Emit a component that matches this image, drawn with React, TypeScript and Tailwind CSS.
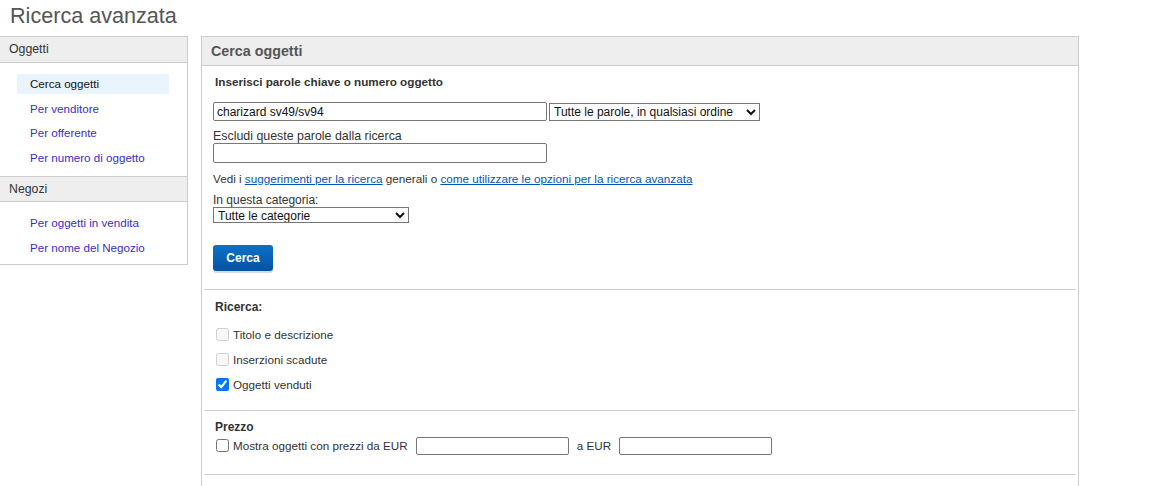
import React from "react";

const sideLink = "flex items-center h-[20px] ml-[17px] w-[152px] pl-[13px] text-[11.6px] text-[#3c2ccc]";

function SideSection({ title, items, active }: { title: string; items: string[]; active?: string }) {
  return (
    <div>
      <div className="h-[26px] flex items-center px-[9px] bg-[#eeeeee] border-b border-[#cccccc] text-[12.3px] text-[#333]">
        {title}
      </div>
      <ul className="flex flex-col gap-[4.6px] pt-[11px] pb-[8px]">
        {items.map((it) =>
          it === active ? (
            <li key={it} className={`${sideLink} bg-[#e9f4fd] !text-[#111]`}>
              {it}
            </li>
          ) : (
            <li key={it} className={sideLink}>
              <a href="#">{it}</a>
            </li>
          )
        )}
      </ul>
    </div>
  );
}

function Divider() {
  return <div className="mx-[2px] h-px bg-[#d0d0d0]" />;
}

function CheckRow({ label, checked, disabled }: { label: string; checked?: boolean; disabled?: boolean }) {
  return (
    <label className="flex items-center h-[18px] gap-[4px]">
      <input type="checkbox" defaultChecked={checked} disabled={disabled} className="ml-[3px] w-[13px] h-[13px]" />
      <span>{label}</span>
    </label>
  );
}

export default function App() {
  return (
    <div className="min-h-screen bg-white text-[11.7px] text-[#333]" style={{ fontFamily: '"Liberation Sans", Arial, sans-serif' }}>
      <h1 className="pl-[10px] pt-[3px] h-[36px] text-[21.6px] leading-[26px] text-[#555]">Ricerca avanzata</h1>

      <div className="flex items-start gap-[13px]">
        {/* Sidebar */}
        <aside className="w-[188px] border-t border-r border-b border-[#cccccc]">
          <SideSection
            title="Oggetti"
            active="Cerca oggetti"
            items={["Cerca oggetti", "Per venditore", "Per offerente", "Per numero di oggetto"]}
          />
          <div className="border-t border-[#cccccc]">
            <div className="h-[25px] flex items-center px-[9px] bg-[#eeeeee] border-b border-[#cccccc] text-[12.3px] text-[#333]">
              Negozi
            </div>
            <ul className="flex flex-col gap-[5px] pt-[11px] pb-[6px]">
              <li className={sideLink}><a href="#">Per oggetti in vendita</a></li>
              <li className={sideLink}><a href="#">Per nome del Negozio</a></li>
            </ul>
          </div>
        </aside>

        {/* Main panel */}
        <main className="w-[878px] border border-[#cccccc]">
          <div className="h-[29px] flex items-center pl-[9px] pt-px bg-[#eeeeee] border-b border-[#cccccc] text-[14.3px] font-bold text-[#555]">
            Cerca oggetti
          </div>

          <section className="px-[11px] pt-[8px] pb-[18px]">
            <p className="pl-[2px] font-bold leading-[16px]">Inserisci parole chiave o numero oggetto</p>
            <div className="mt-[12px] flex items-center gap-[2px]">
              <input
                type="text"
                defaultValue="charizard sv49/sv94"
                className="w-[334px] h-[19px] px-[3px] border border-[#767676] rounded-[2px] text-[12px] text-[#111]"
              />
              <select className="w-[211px] h-[18px] border border-[#767676] text-[12px] text-[#111]">
                <option>Tutte le parole, in qualsiasi ordine</option>
                <option>Qualsiasi parola, in qualsiasi ordine</option>
                <option>Frase esatta</option>
              </select>
            </div>
            <p className="mt-[8px] leading-[14px] text-[12.4px]">Escludi queste parole dalla ricerca</p>
            <input type="text" className="w-[334px] h-[20px] px-[3px] border border-[#767676] rounded-[2px] text-[12px]" />
            <p className="mt-[8px] leading-[16px]">
              Vedi i{" "}
              <a href="#" className="text-[#0654ba] underline">suggerimenti per la ricerca</a>{" "}
              generali o{" "}
              <a href="#" className="text-[#0654ba] underline">come utilizzare le opzioni per la ricerca avanzata</a>
            </p>
            <p className="mt-[7px] leading-[13px] text-[12px]">In questa categoria:</p>
            <select className="w-[196px] h-[16px] border border-[#767676] text-[12px] leading-[14px] text-[#111]">
              <option>Tutte le categorie</option>
            </select>
            <div className="mt-[20px]">
              <button className="w-[60px] h-[26px] rounded-[3px] bg-gradient-to-b from-[#0b72c8] to-[#0652a6] text-white font-bold text-[12px] shadow-[0_2px_0_#dcdcdc]">
                Cerca
              </button>
            </div>
          </section>

          <Divider />

          <section className="px-[11px] pt-[9px] pb-[16px]">
            <p className="pl-[2px] font-bold leading-[16px] text-[12px]">Ricerca:</p>
            <div className="mt-[11px] flex flex-col gap-[7px]">
              <CheckRow label="Titolo e descrizione" disabled />
              <CheckRow label="Inserzioni scadute" disabled />
              <CheckRow label="Oggetti venduti" checked />
            </div>
          </section>

          <Divider />

          <section className="px-[11px] pt-[8px] pb-[19px]">
            <p className="pl-[2px] font-bold leading-[16px] text-[12px]">Prezzo</p>
            <div className="mt-[2px] flex items-center">
              <CheckRow label="Mostra oggetti con prezzi da EUR" />
              <input type="text" className="ml-[8px] w-[153px] h-[18px] border border-[#767676] rounded-[2px]" />
              <span className="ml-[8px]">a EUR</span>
              <input type="text" className="ml-[8px] w-[153px] h-[18px] border border-[#767676] rounded-[2px]" />
            </div>
          </section>

          <Divider />

          <section className="h-[60px]" />
        </main>
      </div>
    </div>
  );
}
